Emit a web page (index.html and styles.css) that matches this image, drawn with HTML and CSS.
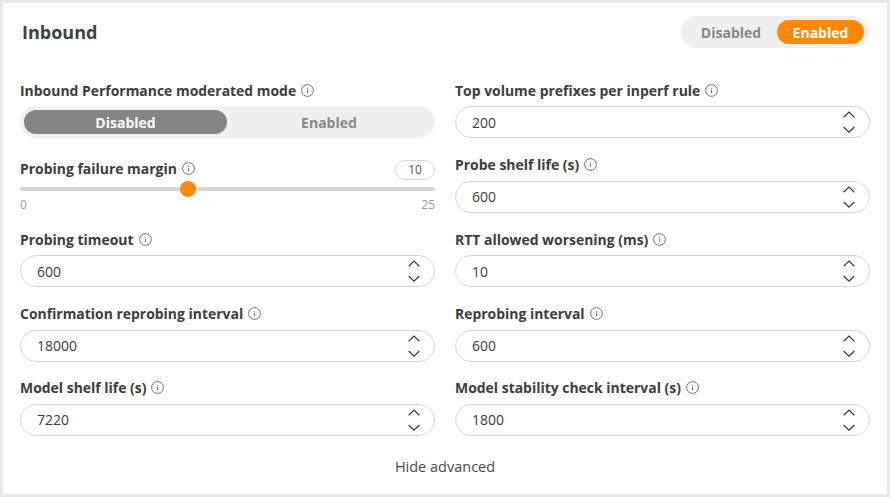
FILE: index.html
```html
<!DOCTYPE html>
<html lang="en">
<head>
<meta charset="utf-8">
<title>Inbound</title>
<link rel="stylesheet" href="styles.css">
</head>
<body>
<svg class="defs" width="0" height="0" aria-hidden="true">
  <symbol id="info" viewBox="0 0 13 13">
    <circle cx="6.5" cy="6.5" r="5.9" fill="none" stroke="#666" stroke-width="0.9"/>
    <rect x="6.05" y="5.6" width="0.9" height="3.6" fill="#666"/>
    <rect x="6.05" y="3.9" width="0.9" height="0.9" fill="#666"/>
  </symbol>
  <symbol id="spin" viewBox="0 0 12 26">
    <path d="M0.7 8.2 L6 3 L11.3 8.2 M0.7 18 L6 23.2 L11.3 18" fill="none" stroke="#3a3a3a" stroke-width="1.2"/>
  </symbol>
</svg>
<main class="card">
  <header class="head">
    <h1 class="title">Inbound</h1>
    <div class="seg seg-small">
      <span class="opt">Disabled</span>
      <span class="opt on-orange">Enabled</span>
    </div>
  </header>
  <div class="cols">
    <div class="col">
      <div class="field">
        <div class="label">Inbound Performance moderated mode<svg class="i"><use href="#info"/></svg></div>
        <div class="seg seg-wide">
          <span class="opt on-grey">Disabled</span>
          <span class="opt">Enabled</span>
        </div>
      </div>
      <div class="field slider-field">
        <div class="label-row">
          <div class="label">Probing failure margin<svg class="i"><use href="#info"/></svg></div>
          <span class="value">10</span>
        </div>
        <div class="track"><span class="thumb"></span></div>
        <div class="ends"><span>0</span><span>25</span></div>
      </div>
      <div class="field">
        <div class="label">Probing timeout<svg class="i"><use href="#info"/></svg></div>
        <div class="input"><span>600</span><svg class="spin"><use href="#spin"/></svg></div>
      </div>
      <div class="field">
        <div class="label">Confirmation reprobing interval<svg class="i"><use href="#info"/></svg></div>
        <div class="input"><span>18000</span><svg class="spin"><use href="#spin"/></svg></div>
      </div>
      <div class="field">
        <div class="label">Model shelf life (s)<svg class="i"><use href="#info"/></svg></div>
        <div class="input"><span>7220</span><svg class="spin"><use href="#spin"/></svg></div>
      </div>
    </div>
    <div class="col">
      <div class="field">
        <div class="label">Top volume prefixes per inperf rule<svg class="i"><use href="#info"/></svg></div>
        <div class="input"><span>200</span><svg class="spin"><use href="#spin"/></svg></div>
      </div>
      <div class="field">
        <div class="label">Probe shelf life (s)<svg class="i"><use href="#info"/></svg></div>
        <div class="input"><span>600</span><svg class="spin"><use href="#spin"/></svg></div>
      </div>
      <div class="field">
        <div class="label">RTT allowed worsening (ms)<svg class="i"><use href="#info"/></svg></div>
        <div class="input"><span>10</span><svg class="spin"><use href="#spin"/></svg></div>
      </div>
      <div class="field">
        <div class="label">Reprobing interval<svg class="i"><use href="#info"/></svg></div>
        <div class="input"><span>600</span><svg class="spin"><use href="#spin"/></svg></div>
      </div>
      <div class="field">
        <div class="label">Model stability check interval (s)<svg class="i"><use href="#info"/></svg></div>
        <div class="input"><span>1800</span><svg class="spin"><use href="#spin"/></svg></div>
      </div>
    </div>
  </div>
  <div class="advanced">Hide advanced</div>
</main>
</body>
</html>
```

FILE: styles.css
```css
* { box-sizing: border-box; }
html, body { margin: 0; height: 100%; }
body {
  background: #e8e8e8;
  padding: 3px;
  font-family: "Open Sans", sans-serif;
  color: #3c3c3c;
  overflow: hidden;
}
.defs { position: absolute; }
.card {
  background: #fff;
  width: 884px;
  height: 491px;
  padding: 13px 17px 0 17px;
}
.head {
  display: flex;
  justify-content: space-between;
  align-items: center;
  height: 32px;
  padding-right: 2px;
}
.title {
  margin: 0 0 0 2px;
  font-size: 18px;
  font-weight: 700;
  color: #37424a;
}
.seg {
  display: flex;
  background: #f0f0f0;
  border-radius: 16px;
  height: 32px;
  padding: 4px;
  font-size: 14px;
  font-weight: 700;
  color: #878787;
}
.opt {
  display: flex;
  align-items: center;
  justify-content: center;
  border-radius: 12px;
  flex: 1;
}
.seg-small { width: 187px; }
.seg-small .opt:first-child { flex: 0 0 92px; }
.seg-small .opt:last-child { flex: 0 0 87px; }
.seg-wide { width: 415px; }
.on-orange { background: #ff8800; color: #fff; }
.on-grey { background: #858585; color: #fff; flex: 0 0 203px; }
.cols {
  display: grid;
  grid-template-columns: 415px 415px;
  column-gap: 20px;
  margin-top: 31.4px;
}
.col { display: flex; flex-direction: column; }
.field { height: 74.4px; }
.label {
  display: flex;
  align-items: center;
  gap: 5px;
  height: 22px;
  margin-bottom: 5px;
  white-space: pre;
  font-size: 13.95px;
  font-weight: 700;
  color: #3c3c3c;
}
.i { width: 13px; height: 13px; flex: none; }
.input {
  display: flex;
  align-items: center;
  justify-content: space-between;
  height: 32px;
  border: 1px solid #d6d6d6;
  border-radius: 16px;
  padding: 0 14.5px 0 16px;
  font-size: 14px;
}
.spin { width: 12px; height: 26px; }
.slider-field { margin-top: 4px; margin-bottom: -4px; }
.label-row {
  display: flex;
  justify-content: space-between;
  align-items: center;
  height: 22px;
}
.label-row .label { margin: 0; }
.value {
  width: 40px;
  height: 20px;
  border: 1px solid #d6d6d6;
  border-radius: 10px;
  font-size: 12px;
  line-height: 18px;
  text-align: center;
  color: #555;
  margin-top: 2px;
}
.track {
  position: relative;
  height: 4px;
  margin-top: 7.3px;
  background: #d6d6d6;
  border-radius: 2px;
}
.thumb {
  position: absolute;
  left: 160px;
  top: -6px;
  width: 16px;
  height: 16px;
  border-radius: 50%;
  background: #ff8800;
}
.ends {
  display: flex;
  justify-content: space-between;
  margin-top: 5.7px;
  font-size: 12px;
  line-height: 16px;
  color: #999;
}
.advanced {
  text-align: center;
  font-size: 14.5px;
  line-height: 20px;
  margin-top: 6px;
  color: #4a4a4a;
}
```
